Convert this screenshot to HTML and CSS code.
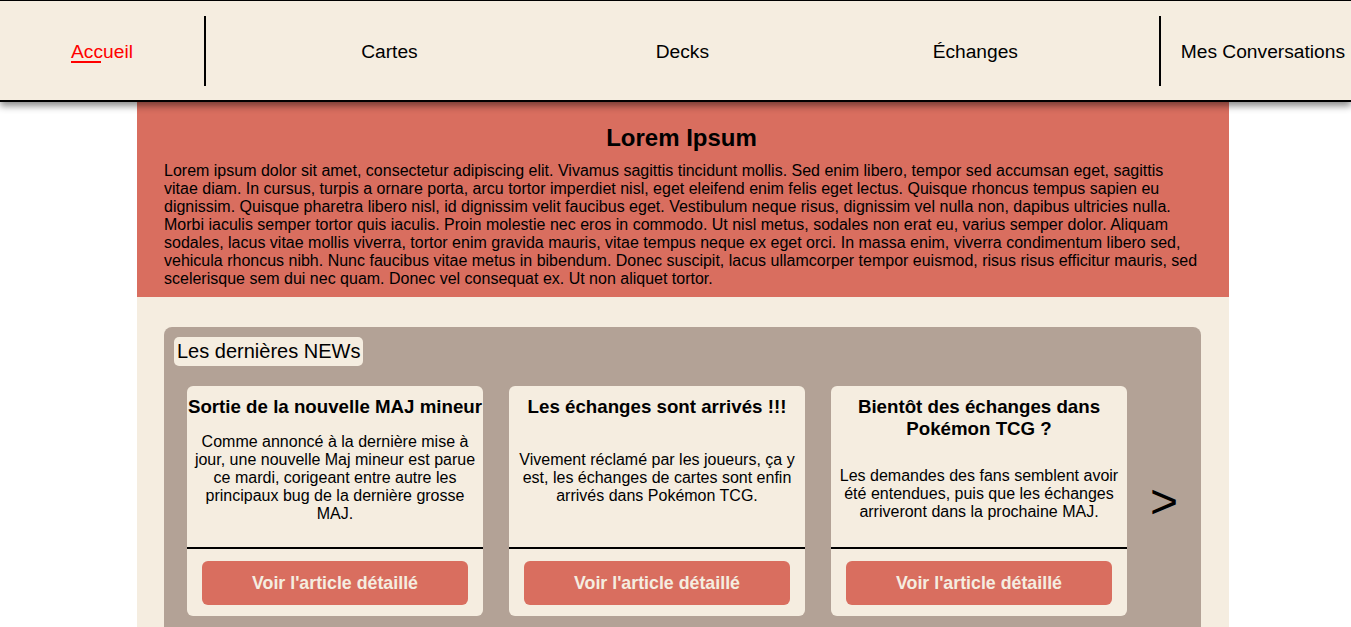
FILE: index.html
```html
<!DOCTYPE html>
<html lang="fr">
<head>
<meta charset="utf-8">
<title>Accueil</title>
<link rel="stylesheet" href="styles.css">
</head>
<body>
<nav class="topnav">
  <div class="nav-home"><a class="nav-link active" href="#">Accueil</a></div>
  <div class="nav-mid">
    <a class="nav-link" href="#">Cartes</a>
    <a class="nav-link" href="#">Decks</a>
    <a class="nav-link" href="#">Échanges</a>
  </div>
  <div class="nav-last"><a class="nav-link" href="#">Mes Conversations</a></div>
</nav>
<main class="page">
  <section class="hero">
    <h2 class="hero-title">Lorem Ipsum</h2>
    <p class="hero-text">Lorem ipsum dolor sit amet, consectetur adipiscing elit. Vivamus sagittis tincidunt mollis. Sed enim libero, tempor sed accumsan eget, sagittis vitae diam. In cursus, turpis a ornare porta, arcu tortor imperdiet nisl, eget eleifend enim felis eget lectus. Quisque rhoncus tempus sapien eu dignissim. Quisque pharetra libero nisl, id dignissim velit faucibus eget. Vestibulum neque risus, dignissim vel nulla non, dapibus ultricies nulla. Morbi iaculis semper tortor quis iaculis. Proin molestie nec eros in commodo. Ut nisl metus, sodales non erat eu, varius semper dolor. Aliquam sodales, lacus vitae mollis viverra, tortor enim gravida mauris, vitae tempus neque ex eget orci. In massa enim, viverra condimentum libero sed, vehicula rhoncus nibh. Nunc faucibus vitae metus in bibendum. Donec suscipit, lacus ullamcorper tempor euismod, risus risus efficitur mauris, sed scelerisque sem dui nec quam. Donec vel consequat ex. Ut non aliquet tortor.</p>
  </section>
  <section class="news-wrap">
    <div class="news">
      <span class="news-label">Les dernières NEWs</span>
      <div class="news-row">
        <div class="cards">
          <article class="card">
            <div class="card-body">
              <h3 class="card-title">Sortie de la nouvelle MAJ mineur</h3>
              <div class="card-desc"><p>Comme annoncé à la dernière mise à jour, une nouvelle Maj mineur est parue ce mardi, corigeant entre autre les principaux bug de la dernière grosse MAJ.</p></div>
            </div>
            <div class="card-foot"><a class="card-btn" href="#">Voir l'article détaillé</a></div>
          </article>
          <article class="card">
            <div class="card-body">
              <h3 class="card-title">Les échanges sont arrivés !!!</h3>
              <div class="card-desc"><p>Vivement réclamé par les joueurs, ça y est, les échanges de cartes sont enfin arrivés dans Pokémon TCG.</p></div>
            </div>
            <div class="card-foot"><a class="card-btn" href="#">Voir l'article détaillé</a></div>
          </article>
          <article class="card">
            <div class="card-body">
              <h3 class="card-title">Bientôt des échanges dans Pokémon TCG ?</h3>
              <div class="card-desc card-desc-low"><p>Les demandes des fans semblent avoir été entendues, puis que les échanges arriveront dans la prochaine MAJ.</p></div>
            </div>
            <div class="card-foot"><a class="card-btn" href="#">Voir l'article détaillé</a></div>
          </article>
        </div>
        <div class="news-next">&gt;</div>
      </div>
    </div>
  </section>
</main>
</body>
</html>
```
FILE: styles.css
```css
html, body {
  margin: 0;
  padding: 0;
}
body {
  background: #ffffff;
  font-family: "Liberation Sans", Arial, sans-serif;
  color: #000;
  overflow: hidden;
}
.topnav {
  position: relative;
  z-index: 2;
  display: flex;
  align-items: center;
  height: 99px;
  background: #f5ede0;
  border-top: 1px solid #000;
  border-bottom: 2px solid #000;
  box-shadow: 0 4px 7px rgba(0, 0, 0, 0.45);
}
.nav-link {
  color: #000;
  text-decoration: none;
  font-size: 19.2px;
  padding-top: 3px;
}
.nav-link.active {
  color: #ff0000;
  background: linear-gradient(#ff0000, #ff0000) left bottom / 30px 2px no-repeat;
}
.nav-home {
  width: 204px;
  height: 70px;
  border-right: 2px solid #000;
  display: flex;
  align-items: center;
  justify-content: center;
}
.nav-mid {
  flex: 1;
  display: flex;
  padding: 0 37px;
}
.nav-mid .nav-link {
  flex: 1;
  text-align: center;
}
.nav-last {
  height: 70px;
  border-left: 2px solid #000;
  display: flex;
  align-items: center;
  padding: 0 6px 0 20px;
}
.page {
  width: 1092px;
  margin-left: 137px;
  background: #f5ede0;
}
.hero {
  background: #d96e5f;
  padding: 22px 30px 9px 27px;
}
.hero-title {
  margin: 0 0 10px;
  font-size: 24px;
  text-align: center;
}
.hero-text {
  margin: 0;
  font-size: 16px;
}
.news-wrap {
  padding: 30px 28px 0 27px;
}
.news {
  background: #b3a296;
  border-radius: 8px;
  padding: 10px 0 20px 10px;
}
.news-label {
  display: inline-block;
  background: #f5ede0;
  border-radius: 5px;
  font-size: 20px;
  line-height: 23px;
  padding: 3px 3px 3px;
}
.news-row {
  display: flex;
  margin-top: 20px;
  padding-left: 13px;
}
.cards {
  display: flex;
  gap: 26px;
}
.card {
  width: 296px;
  background: #f5ede0;
  border-radius: 6px;
  display: flex;
  flex-direction: column;
}
.card-body {
  flex: 1;
  display: flex;
  flex-direction: column;
  padding: 10px 0 9px;
}
.card-title {
  margin: 0;
  font-size: 18.72px;
  line-height: 22px;
  text-align: center;
}
.card-desc {
  flex: 1;
  display: flex;
  align-items: center;
  justify-content: center;
  padding: 15px 6px;
}
.card-desc-low {
  padding-top: 24px;
  padding-bottom: 15px;
}
.card-desc p {
  margin: 0;
  font-size: 16px;
  line-height: 18px;
  text-align: center;
}
.card-foot {
  border-top: 2px solid #000;
  padding: 12px 15px 11px;
}
.card-btn {
  display: flex;
  align-items: center;
  justify-content: center;
  height: 44px;
  background: #d96e5f;
  border-radius: 6px;
  color: #f5ede0;
  font-weight: bold;
  font-size: 17.8px;
  text-decoration: none;
}
.news-next {
  flex: 1;
  display: flex;
  align-items: center;
  justify-content: center;
  font-size: 48px;
}
```
